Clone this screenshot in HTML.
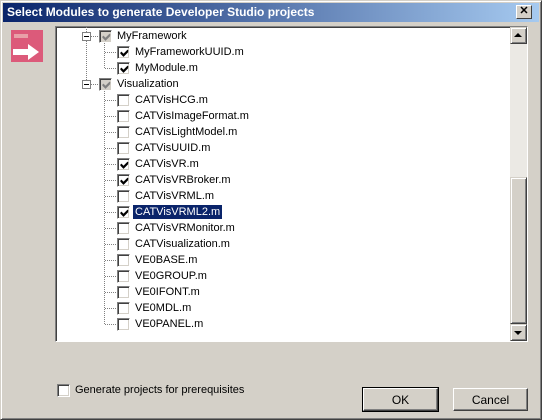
<!DOCTYPE html>
<html><head><style>
*{margin:0;padding:0;box-sizing:border-box}
body{width:542px;height:420px;background:#d4d0c8;font-family:"Liberation Sans",sans-serif;font-size:11px;position:relative;overflow:hidden}
.a{position:absolute}
.win{left:0;top:0;width:542px;height:420px;border:1px solid #404040;border-top-color:#d4d0c8;border-left-color:#d4d0c8;box-shadow:inset 1px 1px #fff,inset -1px -1px #808080}
.title{left:3px;top:3px;width:536px;height:19px;background:linear-gradient(to right,#0a246a,#a6caf0);color:#fff;font-weight:bold;font-size:12px;line-height:18px;padding-left:4px}
.btnx{left:516px;top:5px;width:16px;height:14px;background:#d4d0c8;border:1px solid;border-color:#fff #404040 #404040 #fff;font-size:11px;line-height:11px;text-align:center;font-weight:bold;color:#000}
.tree{left:55px;top:26px;width:473px;height:316px;background:#fff;border:1px solid;border-color:#808080 #fff #fff #808080;box-shadow:inset 1px 1px #404040}
.cb{width:13px;height:13px;border:1px solid;border-color:#808080 #fff #fff #808080;background:#fff;box-shadow:inset 1px 1px #404040, inset -1px -1px #d4d0c8}
.cb svg{position:absolute;left:2px;top:2px}
.t{line-height:14px;color:#000}
.dv{border-left:1px dotted #808080;width:0}
.dh{border-top:1px dotted #808080;height:0}
.pm{width:9px;height:9px;border:1px solid #808080;background:#fff}
.pm:after{content:"";position:absolute;left:1px;top:3px;width:5px;height:1px;background:#000}
.sb{left:510px;top:27px;width:17px;height:314px;background:#ebe9e4}
.sbb{background:#d4d0c8;border:1px solid;border-color:#d4d0c8 #404040 #404040 #d4d0c8;box-shadow:inset 1px 1px #fff,inset -1px -1px #808080}
.btn{background:#d4d0c8;border:1px solid;border-color:#fff #404040 #404040 #fff;box-shadow:inset -1px -1px #808080;text-align:center;line-height:22px;font-size:12px}
</style></head><body>
<div class="a win"></div>
<div class="a title">Select Modules to generate Developer Studio projects</div>
<div class="a btnx">✕</div>
<div class="a" style="left:11px;top:30px;width:32px;height:32px;background:#dc5a7a"></div>
<div class="a" style="left:14px;top:34px;width:14px;height:4px;background:#e8a0a8"></div>
<div class="a" style="left:13px;top:49px;width:16px;height:6px;background:#fff"></div>
<div class="a" style="left:28px;top:44px;width:0;height:0;border-left:11px solid #fff;border-top:8px solid transparent;border-bottom:8px solid transparent"></div>
<div class="a tree"></div>
<div class="a dv" style="left:86px;top:27px;height:57px"></div>
<div class="a dv" style="left:104px;top:42px;height:26px"></div>
<div class="a dv" style="left:104px;top:90px;height:234px"></div>
<div id="rows"></div>
<div class="a sb"></div>
<div class="a sbb" style="left:510px;top:27px;width:17px;height:17px"></div>
<div class="a" style="left:514px;top:33px;border-left:4px solid transparent;border-right:4px solid transparent;border-bottom:4px solid #000"></div>
<div class="a sbb" style="left:510px;top:177px;width:17px;height:147px"></div>
<div class="a sbb" style="left:510px;top:324px;width:17px;height:17px"></div>
<div class="a" style="left:514px;top:331px;border-left:4px solid transparent;border-right:4px solid transparent;border-top:4px solid #000"></div>
<div class="a cb" style="left:57px;top:384px"></div>
<div class="a t" style="left:75px;top:383px">Generate projects for prerequisites</div>
<div class="a btn" style="left:363px;top:388px;width:75px;height:23px;outline:1px solid #000">OK</div>
<div class="a btn" style="left:453px;top:388px;width:75px;height:23px">Cancel</div>
<script>
var rows=[[0,"MyFramework",2],[1,"MyFrameworkUUID.m",1],[1,"MyModule.m",1],[0,"Visualization",2],
[1,"CATVisHCG.m",0],[1,"CATVisImageFormat.m",0],[1,"CATVisLightModel.m",0],[1,"CATVisUUID.m",0],
[1,"CATVisVR.m",1],[1,"CATVisVRBroker.m",1],[1,"CATVisVRML.m",0],[1,"CATVisVRML2.m",1],
[1,"CATVisVRMonitor.m",0],[1,"CATVisualization.m",0],[1,"VE0BASE.m",0],[1,"VE0GROUP.m",0],
[1,"VE0IFONT.m",0],[1,"VE0MDL.m",0],[1,"VE0PANEL.m",0]];
var h="";
rows.forEach(function(r,i){var y=36+i*16;var cx=r[0]?117:99;
if(r[0]==0){h+='<div class="a pm" style="left:82px;top:'+(y-4)+'px"></div><div class="a dh" style="left:91px;top:'+y+'px;width:7px"></div>';}
else h+='<div class="a dh" style="left:105px;top:'+y+'px;width:11px"></div>';
var col=r[2]==2?'#808080':'#000';
var ck=r[2]?'<svg width="9" height="9"><path d="M1 3 L3.5 5.5 L8 1 M1 4.5 L3.5 7 L8 2.5 M1 3.5 L1 5 M3.5 6 L8 1.5" stroke="'+col+'" stroke-width="1.2" fill="none"/></svg>':'';
h+='<div class="a cb" style="left:'+cx+'px;top:'+(y-6)+'px;'+(r[2]==2?'background:#d4d0c8':'')+'">'+ck+'</div>';
var sel=r[1]=="CATVisVRML2.m";
h+='<div class="a t" style="left:'+(cx+16)+'px;top:'+(y-7)+'px;padding:0 2px;'+(sel?'background:#0a246a;color:#fff':'')+'">'+r[1]+'</div>';});
document.getElementById("rows").innerHTML=h;
</script>
</body></html>
